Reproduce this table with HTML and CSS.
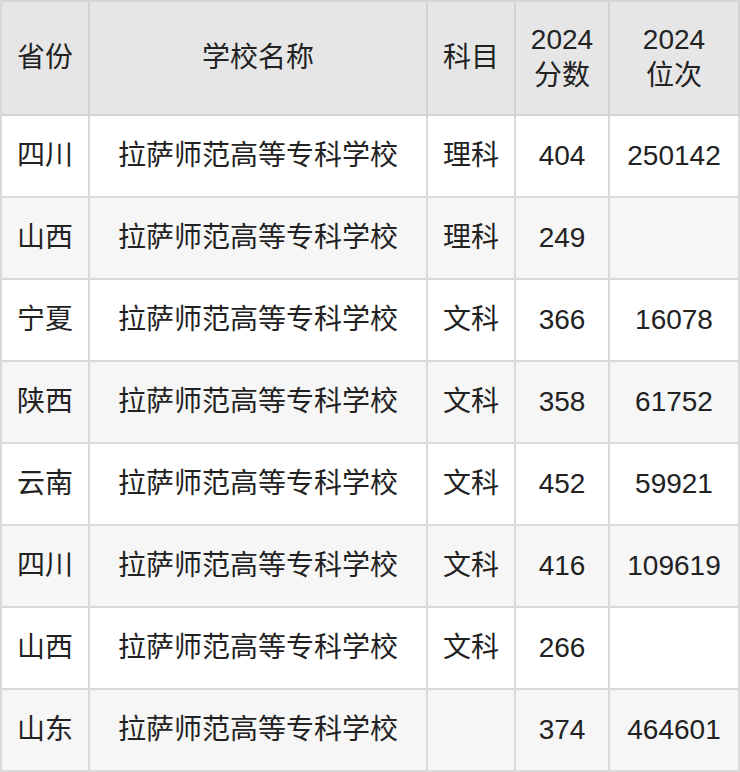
FILE: index.html
```html
<!DOCTYPE html>
<html lang="zh">
<head>
<meta charset="utf-8">
<link rel="stylesheet" href="styles.css">
</head>
<body>
<table class="score-table">
  <thead>
    <tr>
      <th class="c-prov">省份</th>
      <th class="c-school">学校名称</th>
      <th class="c-subj">科目</th>
      <th class="c-score">2024<br>分数</th>
      <th class="c-rank">2024<br>位次</th>
    </tr>
  </thead>
  <tbody>
    <tr><td>四川</td><td>拉萨师范高等专科学校</td><td>理科</td><td>404</td><td>250142</td></tr>
    <tr><td>山西</td><td>拉萨师范高等专科学校</td><td>理科</td><td>249</td><td></td></tr>
    <tr><td>宁夏</td><td>拉萨师范高等专科学校</td><td>文科</td><td>366</td><td>16078</td></tr>
    <tr><td>陕西</td><td>拉萨师范高等专科学校</td><td>文科</td><td>358</td><td>61752</td></tr>
    <tr><td>云南</td><td>拉萨师范高等专科学校</td><td>文科</td><td>452</td><td>59921</td></tr>
    <tr><td>四川</td><td>拉萨师范高等专科学校</td><td>文科</td><td>416</td><td>109619</td></tr>
    <tr><td>山西</td><td>拉萨师范高等专科学校</td><td>文科</td><td>266</td><td></td></tr>
    <tr><td>山东</td><td>拉萨师范高等专科学校</td><td></td><td>374</td><td>464601</td></tr>
  </tbody>
</table>
</body>
</html>
```

FILE: styles.css
```css
html, body {
  margin: 0;
  padding: 0;
  background: #ffffff;
}

body {
  font-family: "Liberation Sans", "Noto Sans CJK SC", sans-serif;
  color: #222222;
}

.score-table {
  box-sizing: border-box;
  width: 740px;
  border-collapse: separate;
  border-spacing: 0;
  table-layout: fixed;
  font-size: 28px;
  border-top: 2px solid #d6d6d6;
  border-left: 2px solid #d9d9d9;
}

.score-table th,
.score-table td {
  box-sizing: border-box;
  border-right: 2px solid #d9d9d9;
  border-bottom: 2px solid #d9d9d9;
  text-align: center;
  vertical-align: middle;
  padding: 0;
  line-height: 36px;
}

.c-prov { width: 88px; }
.c-school { width: 338px; }
.c-subj { width: 88px; }
.c-score { width: 94px; }
.c-rank { width: 130px; }

.score-table th {
  background: #e6e6e6;
  font-weight: normal;
  height: 114px;
  border-color: #d3d3d3;
}

.score-table td {
  height: 82px;
}

.score-table tbody tr:nth-child(even) td {
  background: #f6f6f6;
}
```
